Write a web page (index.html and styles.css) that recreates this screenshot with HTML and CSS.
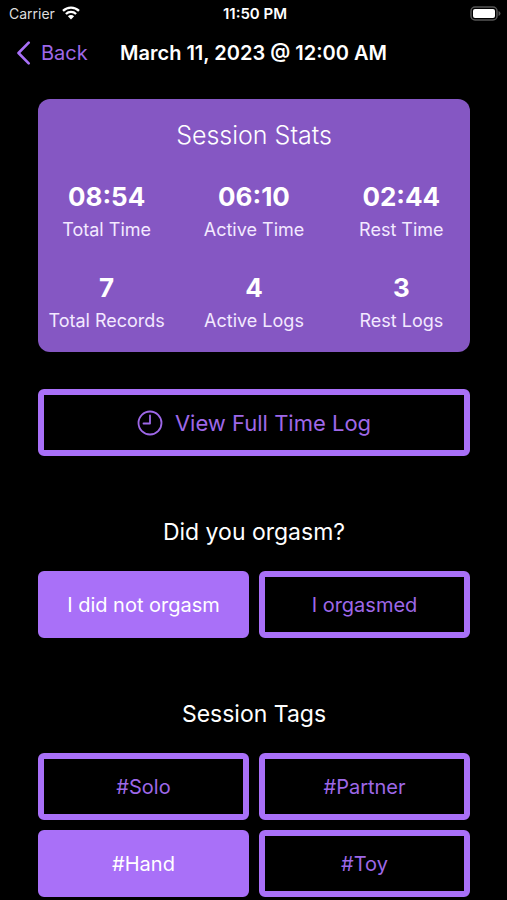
FILE: index.html
```html
<!DOCTYPE html>
<html lang="en">
<head>
<meta charset="utf-8">
<meta name="viewport" content="width=device-width, initial-scale=1">
<title>Session</title>
<link rel="stylesheet" href="styles.css">
</head>
<body>
<div class="status">
  <div class="carrier">
    <span>Carrier</span>
    <svg class="wifi" viewBox="0 0 18 14" aria-hidden="true">
      <path d="M1 4.9a11.4 11.4 0 0 1 16 0M3.900 8a7.300 7.300 0 0 1 10.200 0" fill="none" stroke="currentColor" stroke-width="2.300"/>
      <path d="M5.900 10.300a4.400 4.400 0 0 1 6.200 0L9 13.600z" fill="currentColor"/>
    </svg>
  </div>
  <span class="clock">11:50 PM</span>
  <svg class="battery" viewBox="0 0 31 15" aria-hidden="true">
    <rect x="1" y="1" width="26" height="13" rx="4" fill="none" stroke="#555" stroke-width="1.500"/>
    <rect x="3" y="3" width="22" height="9" rx="2" fill="#fff"/>
    <path d="M28.500 5v5q2-.8 2-2.500t-2-2.500z" fill="#555"/>
  </svg>
</div>
<header class="nav">
  <a class="back" href="#">
    <svg class="chevron" viewBox="0 0 14 24" aria-hidden="true">
      <path d="M12.200 1.700 2 12l10.200 10.300" fill="none" stroke="currentColor" stroke-width="2.600" stroke-linecap="round" stroke-linejoin="round"/>
    </svg>
    <span>Back</span>
  </a>
  <h1 class="title">March 11, 2023 @ 12:00 AM</h1>
</header>
<main class="content">
  <section class="card">
    <h2 class="card-title">Session Stats</h2>
    <dl class="stats">
      <div class="stat"><dt>Total Time</dt><dd>08:54</dd></div>
      <div class="stat"><dt>Active Time</dt><dd>06:10</dd></div>
      <div class="stat"><dt>Rest Time</dt><dd>02:44</dd></div>
      <div class="stat"><dt>Total Records</dt><dd>7</dd></div>
      <div class="stat"><dt>Active Logs</dt><dd>4</dd></div>
      <div class="stat"><dt>Rest Logs</dt><dd>3</dd></div>
    </dl>
  </section>
  <button class="button log" type="button">
    <svg class="clock-icon" viewBox="0 0 26 26" aria-hidden="true">
      <circle cx="13" cy="13" r="11.500" fill="none" stroke="currentColor" stroke-width="1.800"/>
      <path d="M13 5.500V13.500H6.500" fill="none" stroke="currentColor" stroke-width="1.800" stroke-linecap="round" stroke-linejoin="round"/>
    </svg>
    <span>View Full Time Log</span>
  </button>
  <section class="group">
    <h2 class="heading">Did you orgasm?</h2>
    <div class="options">
      <button class="button selected" type="button" aria-pressed="true">I did not orgasm</button>
      <button class="button" type="button" aria-pressed="false">I orgasmed</button>
    </div>
  </section>
  <section class="group">
    <h2 class="heading">Session Tags</h2>
    <div class="options">
      <button class="button" type="button" aria-pressed="false">#Solo</button>
      <button class="button" type="button" aria-pressed="false">#Partner</button>
      <button class="button selected" type="button" aria-pressed="true">#Hand</button>
      <button class="button" type="button" aria-pressed="false">#Toy</button>
    </div>
  </section>
</main>
</body>
</html>
```
FILE: styles.css
```css
* {
  box-sizing: border-box;
}

body {
  margin: 0;
  background: #000;
  color: #fff;
  font-family: Inter, "Liberation Sans", sans-serif;
  font-size: 20px;
}

h1,
h2,
dl,
dd {
  margin: 0;
}

.status {
  display: grid;
  grid-template-columns: 1fr auto 1fr;
  align-items: center;
  height: 26px;
  padding: 0 6px 0 9px;
  font-size: 14px;
}

.carrier {
  display: flex;
  align-items: center;
  gap: 7px;
  color: #ddd;
}

.wifi {
  width: 18px;
  height: 14px;
  color: #fff;
}

.clock {
  font-size: 15px;
  font-weight: 600;
}

.battery {
  justify-self: end;
  width: 31px;
  height: 15px;
}

.nav {
  display: grid;
  grid-template-columns: 1fr auto 1fr;
  align-items: center;
  height: 53px;
  padding: 0 16px;
}

.back {
  display: flex;
  align-items: center;
  gap: 10px;
  color: #9e68e8;
  text-decoration: none;
}

.chevron {
  width: 15px;
  height: 24px;
  color: #a970f8;
}

.title {
  font-size: 20px;
  font-weight: 600;
  white-space: nowrap;
}

.content {
  padding: 20px 37px 3px 38px;
}

.card {
  padding: 20px 12px 17px;
  border-radius: 12px;
  background: #8557c3;
  text-align: center;
}

.card-title {
  font-size: 25px;
  font-weight: 300;
  line-height: 32px;
}

.stats {
  display: grid;
  grid-template-columns: repeat(3, minmax(0, 1fr));
  gap: 25px 34px;
  margin-top: 27px;
}

.stat {
  display: flex;
  flex-direction: column-reverse;
  align-items: center;
  justify-content: flex-end;
  white-space: nowrap;
}

.stat dt {
  color: #f3e9ff;
  font-size: 18px;
  line-height: 28px;
}

.stat dd {
  font-size: 26px;
  font-weight: 700;
  line-height: 38px;
}

.button {
  display: flex;
  align-items: center;
  justify-content: center;
  height: 67px;
  padding: 0;
  border: 6px solid #a970f8;
  border-radius: 6px;
  background: #000;
  color: #9e68e8;
  font: inherit;
}

.button.selected {
  background: #a970f8;
  color: #fff;
}

.log {
  gap: 12px;
  width: 100%;
  margin-top: 37px;
  font-size: 22px;
}

.clock-icon {
  width: 26px;
  height: 26px;
}

.group {
  margin-top: 60px;
}

.heading {
  font-size: 23px;
  font-weight: 400;
  line-height: 32px;
  text-align: center;
}

.options {
  display: grid;
  grid-template-columns: 1fr 1fr;
  gap: 10px;
  margin-top: 23px;
}
```
